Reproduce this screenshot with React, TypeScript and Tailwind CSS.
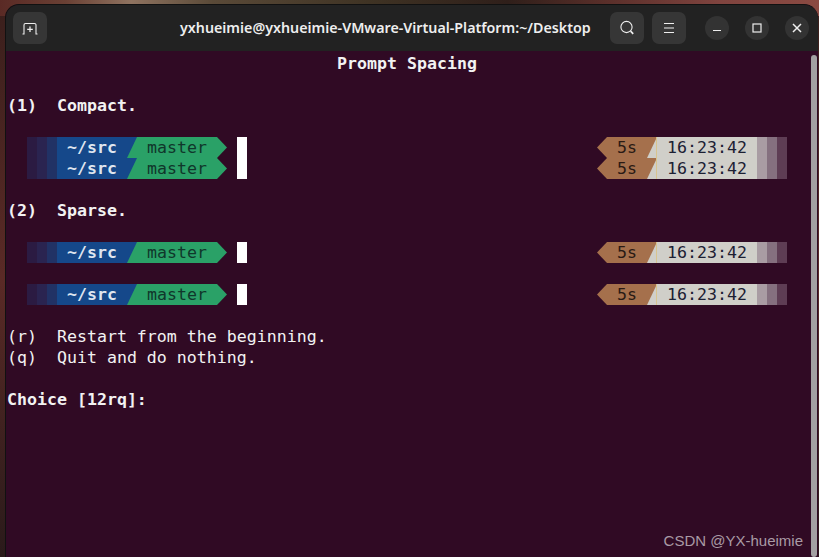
const Left = () => (
  <div className="flex h-[21px]">
    <div className="w-[10px] bg-[#2b1b42]" />
    <div className="w-[10px] bg-[#2a2450]" />
    <div className="w-[10px] bg-[#213265]" />
    <div className="w-[70px] pl-[10px] bg-[#15488a] text-[#dfe5ef] font-bold">~/src</div>
    <div className="relative w-[10px] bg-[#15488a]">
      <svg width="10" height="21" className="absolute inset-0">
        <polygon points="10,0 10,21 0,21" fill="#2aa167" />
      </svg>
    </div>
    <div className="w-[80px] pl-[10px] bg-[#2aa167] text-[#10372b]">master</div>
    <svg width="10" height="21" className="block">
      <polygon points="0,0 10,10.5 0,21" fill="#2aa167" />
    </svg>
    <div className="w-[10px]" />
    <div className="w-[10px] bg-white" />
  </div>
);

const Right = () => (
  <div className="flex h-[21px]">
    <svg width="10" height="21" className="block">
      <polygon points="10,0 0,10.5 10,21" fill="#a5704c" />
    </svg>
    <div className="w-[40px] pl-[10px] bg-[#a5704c] text-[#2a1a14]">5s</div>
    <div className="relative w-[10px] bg-[#d0cfc9]">
      <svg width="10" height="21" className="absolute inset-0">
        <polygon points="0,0 10,0 0,21" fill="#a5704c" />
        <line x1="9.5" y1="0" x2="9.5" y2="21" stroke="#d8c48e" strokeWidth="1" />
      </svg>
    </div>
    <div className="w-[100px] pl-[10px] bg-[#d0cfc9] text-[#1c2033]">16:23:42</div>
    <div className="w-[10px] bg-[#a99ca3]" />
    <div className="w-[10px] bg-[#85707f]" />
    <div className="w-[10px] bg-[#5e3d54]" />
  </div>
);

const Prompt = () => (
  <div className="flex justify-between h-[21px] pl-[20px] pr-[31px]">
    <Left />
    <Right />
  </div>
);

const Line = ({ children, bold }: { children?: string; bold?: boolean }) => (
  <div className={bold ? "h-[21px] whitespace-pre font-bold" : "h-[21px] whitespace-pre"}>{children}</div>
);

const headerButton = "flex items-center justify-center w-[34px] h-[32px] rounded-[7px] bg-[#363636]";
const windowButton = "flex items-center justify-center w-[24px] h-[24px] rounded-full bg-[#333333]";

export default function App() {
  return (
    <div className="relative w-[819px] h-[557px] overflow-hidden bg-gradient-to-b from-[#3a1f1c] via-[#5a2a26] to-[#2a1a1a] pl-[5px] pr-[1px] pt-[4px]">
      <div className="absolute inset-x-0 top-0 h-[16px] bg-[linear-gradient(to_right,#5a2a25_0%,#6a4034_8%,#8f7360_16%,#5a4a38_26%,#3f3324_45%,#2f1f1a_62%,#5a2f2a_74%,#80443f_88%,#8a4a42_100%)]" />
      <div className="relative flex flex-col h-[553px] rounded-t-[14px] overflow-hidden border-t border-l border-[#111111] bg-[#300a24]">
        <header className="flex items-center h-[46px] shrink-0 bg-[#222222] pl-[7px] pr-[9px] font-['Noto_Sans',sans-serif]">
          <button className={headerButton}>
            <svg width="16" height="16" viewBox="0 0 16 16" fill="none" stroke="#eeeeee" strokeWidth="1.1">
              <path d="M0.5 14h1.5V5a1.5 1.5 0 0 1 1.5-1.5h9A1.5 1.5 0 0 1 14 5v9h1.5" />
              <path d="M8 6.5v5.5M5.2 9.3h5.6" strokeWidth="1.3" />
            </svg>
          </button>
          <h1 className="ml-[133px] text-[14.25px] font-semibold text-[#eeeeee] whitespace-nowrap">
            yxhueimie@yxhueimie-VMware-Virtual-Platform:~/Desktop
          </h1>
          <div className="ml-auto flex items-center">
            <button className={headerButton}>
              <svg width="16" height="16" viewBox="0 0 16 16" fill="none" stroke="#eeeeee">
                <circle cx="7.5" cy="7" r="5.6" strokeWidth="1.1" />
                <path d="M11.6 11.2l2.6 2.6" strokeWidth="1.7" />
              </svg>
            </button>
            <button className={`ml-[8px] ${headerButton}`}>
              <svg width="16" height="16" viewBox="0 0 16 16" fill="none" stroke="#eeeeee" strokeWidth="1.1">
                <path d="M3 3.5h10M3 8h10M3 12.5h10" />
              </svg>
            </button>
            <button className={`ml-[19px] ${windowButton}`}>
              <svg width="12" height="12" viewBox="0 0 12 12" fill="none" stroke="#eeeeee" strokeWidth="1.2">
                <path d="M2 8.5h8" />
              </svg>
            </button>
            <button className={`ml-[16px] ${windowButton}`}>
              <svg width="12" height="12" viewBox="0 0 12 12" fill="none" stroke="#eeeeee" strokeWidth="1.2">
                <rect x="2" y="2" width="8" height="8" />
              </svg>
            </button>
            <button className={`ml-[16px] ${windowButton}`}>
              <svg width="12" height="12" viewBox="0 0 12 12" fill="none" stroke="#eeeeee" strokeWidth="1.5">
                <path d="M2 2l8 8M10 2l-8 8" />
              </svg>
            </button>
          </div>
        </header>
        <main className="relative flex-1 pl-[1px] pt-[1px] font-['DejaVu_Sans_Mono',monospace] text-[16.6px] leading-[21px] text-[#f2f2f2]">
          <div className="h-[21px] mt-[1px] whitespace-pre font-bold text-center pr-[11px]">Prompt Spacing</div>
          <Line />
          <Line bold>{"(1)  Compact."}</Line>
          <Line />
          <Prompt />
          <Prompt />
          <Line />
          <Line bold>{"(2)  Sparse."}</Line>
          <Line />
          <Prompt />
          <Line />
          <Prompt />
          <Line />
          <Line>{"(r)  Restart from the beginning."}</Line>
          <Line>{"(q)  Quit and do nothing."}</Line>
          <Line />
          <Line bold>{"Choice [12rq]:"}</Line>
          <div className="absolute right-[1px] top-[4px] bottom-0 w-[6px] rounded-full bg-[#a3a0a2]" />
          <div className="absolute right-[15px] bottom-[7px] font-['Liberation_Sans',sans-serif] text-[15px] leading-[18px] text-[#a99aa5]">
            CSDN @YX-hueimie
          </div>
        </main>
      </div>
    </div>
  );
}
